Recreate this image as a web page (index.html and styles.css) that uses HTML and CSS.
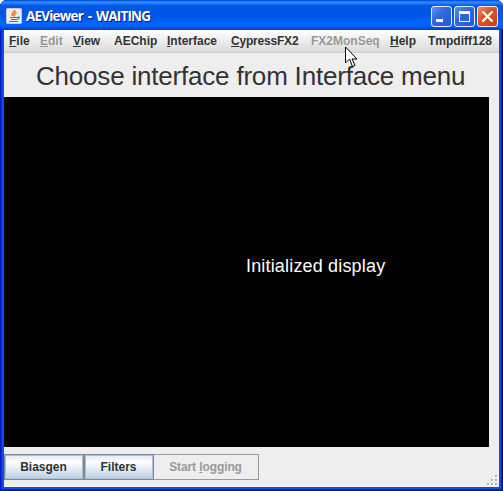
FILE: index.html
```html
<!DOCTYPE html>
<html lang="en">
<head>
<meta charset="utf-8">
<title>AEViewer - WAITING</title>
<link rel="stylesheet" href="styles.css">
</head>
<body>
<div class="window">
  <header class="titlebar">
    <svg class="app-icon" width="16" height="16" viewBox="0 0 16 16">
      <rect x=".5" y=".5" width="15" height="15" rx="1" fill="#ececea" stroke="#c5cbd2"/>
      <path d="M9 2C9 4 5 5 6.500 8M10.500 4.500C7.500 6 9 6.500 8 8.500" fill="none" stroke="#ef7d22" stroke-width="1.700"/>
      <path d="M4 9.500h7M5 11.500h5M3 13.500h9M11 9.500q3-1 2 .5t-3 1.500" fill="none" stroke="#56779d" stroke-width="1.200"/>
    </svg>
    <h1 class="title">AEViewer - WAITING</h1>
    <div class="controls">
      <svg width="21" height="21" viewBox="0 0 21 21">
        <defs>
          <linearGradient id="blue" x1="0" y1="0" x2="1" y2="1"><stop offset="0" stop-color="#6b91ef"/><stop offset=".4" stop-color="#3568df"/><stop offset="1" stop-color="#2157da"/></linearGradient>
          <linearGradient id="red" x1="0" y1="0" x2="1" y2="1"><stop offset="0" stop-color="#ed9279"/><stop offset=".4" stop-color="#e0532b"/><stop offset="1" stop-color="#c63d13"/></linearGradient>
        </defs>
        <rect x=".5" y=".5" width="20" height="20" rx="2.500" fill="url(#blue)" stroke="#e5edff"/>
        <path d="M5 13h7v3H5z" fill="#fff"/>
      </svg>
      <svg width="21" height="21" viewBox="0 0 21 21">
        <rect x=".5" y=".5" width="20" height="20" rx="2.500" fill="url(#blue)" stroke="#e5edff"/>
        <path d="M5 5h11v11H5zM6 8v7h9V8z" fill="#fff" fill-rule="evenodd"/>
      </svg>
      <svg width="21" height="21" viewBox="0 0 21 21">
        <rect x=".5" y=".5" width="20" height="20" rx="2.500" fill="url(#red)" stroke="#ffe9e3"/>
        <path d="M5.500 5.500l10 10M15.500 5.500l-10 10" stroke="#fff" stroke-width="2.200"/>
      </svg>
    </div>
  </header>
  <main class="client">
    <nav class="menubar">
      <span><u>F</u>ile</span>
      <span class="disabled"><u>E</u>dit</span>
      <span><u>V</u>iew</span>
      <span>AEChip</span>
      <span><u>I</u>nterface</span>
      <span class="tight"><u>C</u>ypressFX2</span>
      <span class="disabled">FX2MonSeq</span>
      <span><u>H</u>elp</span>
      <span>Tmpdiff128</span>
    </nav>
    <h2 class="message">Choose interface from Interface menu</h2>
    <section class="display"><p class="status">Initialized display</p></section>
    <footer class="toolbar">
      <button class="btn biasgen">Biasgen</button>
      <button class="btn filters">Filters</button>
      <button class="btn logging" disabled>Start <u>l</u>ogging</button>
      <svg class="grip" width="12" height="12" viewBox="0 0 12 12">
        <path d="M9 1h2v2H9zM5 5h2v2H5zM9 5h2v2H9zM1 9h2v2H1zM5 9h2v2H5zM9 9h2v2H9z" fill="#fff"/>
        <path d="M8 0h2v2H8zM4 4h2v2H4zM8 4h2v2H8zM0 8h2v2H0zM4 8h2v2H4zM8 8h2v2H8z" fill="#b5b3a2"/>
      </svg>
    </footer>
  </main>
  <svg class="cursor" width="13" height="22" viewBox="0 0 13 22">
    <path d="M.5 1v16l4-4 3 7.500 2.500-1-3-6.500h5z" fill="#fff" stroke="#000"/>
  </svg>
</div>
</body>
</html>
```
FILE: styles.css
```css
* { box-sizing: border-box; }
body {
  margin: 0;
  background: #fff;
  font: bold 12px "Liberation Sans", Arial, sans-serif;
  color: #333;
}
.window {
  position: relative;
  width: 503px;
  height: 491px;
  padding: 0 4px 4px;
  display: flex;
  flex-direction: column;
  overflow: hidden;
  border-radius: 7px 7px 0 0;
  background: #0a50e8;
  box-shadow: inset 1px 0 #0019cf, inset -1px 0 #00138c, inset 0 -1px #00138c, inset -2px 0 #0029b4, inset 0 -2px #0029b4, inset 2px 0 #0831d9;
}
.titlebar {
  flex: none;
  height: 30px;
  margin: 0 -4px;
  padding: 2px 5px 0 6px;
  display: flex;
  align-items: center;
  background: linear-gradient(#0050dc 0, #0a5ce8 1px, #3a92ff 2px, #1373f5 4px, #0058e6 6px, #0054e0 12px, #0059ec 18px, #0066fd 23px, #0064fb 26px, #0050dd 28px, #0040bd 30px);
}
.app-icon { flex: none; }
.title {
  flex: 1;
  margin: 0 0 0 4px;
  font: bold 13.5px/18px "Open Sans", sans-serif;
  letter-spacing: -0.8px;
  word-spacing: 2px;
  white-space: nowrap;
  color: #fff;
  text-shadow: 1px 1px #0a1883;
}
.controls { display: flex; gap: 2px; }
.controls svg { display: block; }
.client {
  flex: 1;
  display: flex;
  flex-direction: column;
  background: #eee;
}
.menubar {
  flex: none;
  height: 23px;
  padding-left: 5px;
  display: grid;
  grid-template-columns: 31px 33px 41px 53px 64px 80px 79px 38px 1fr;
  line-height: 22px;
  white-space: nowrap;
  background: linear-gradient(#fff, #dadada);
  border-bottom: 1px solid #ccc;
}
.tight { letter-spacing: -0.2px; }
u { text-decoration: underline; text-underline-offset: 1px; text-decoration-thickness: 1px; text-decoration-skip-ink: none; }
.disabled, .btn:disabled { color: #999; }
.message {
  flex: none;
  height: 44px;
  margin: 0;
  padding-left: 32px;
  font-size: 26px;
  font-weight: normal;
  letter-spacing: -0.2px;
  line-height: 46px;
  white-space: nowrap;
}
.display {
  flex: none;
  width: 485px;
  height: 350px;
  padding: 159px 0 0 242px;
  background: #000;
}
.status {
  margin: 0;
  font: 18px/21px "Liberation Sans", Arial, sans-serif;
  letter-spacing: 0.17px;
  white-space: nowrap;
  color: #fff;
}
.toolbar {
  flex: 1;
  display: flex;
  align-items: flex-start;
  padding: 7px 0 0;
}
.btn {
  height: 26px;
  padding: 0 1px 0 0;
  border: 1px solid #7a8a99;
  font: inherit;
  color: #333;
  background: linear-gradient(#dde8f3 0, #fff 30%, #b8cfe5 100%);
  box-shadow: inset 0 0 0 1px #b0c0d0;
}
.biasgen { width: 80px; }
.filters { width: 70px; }
.logging { width: 106px; margin-left: -1px; border-color: #999; border-left-color: #7a8a99; background: #eee; box-shadow: none; letter-spacing: -0.1px; }
.grip { margin: 21px 0 0 auto; }
.cursor { position: absolute; left: 345px; top: 46px; }
```
